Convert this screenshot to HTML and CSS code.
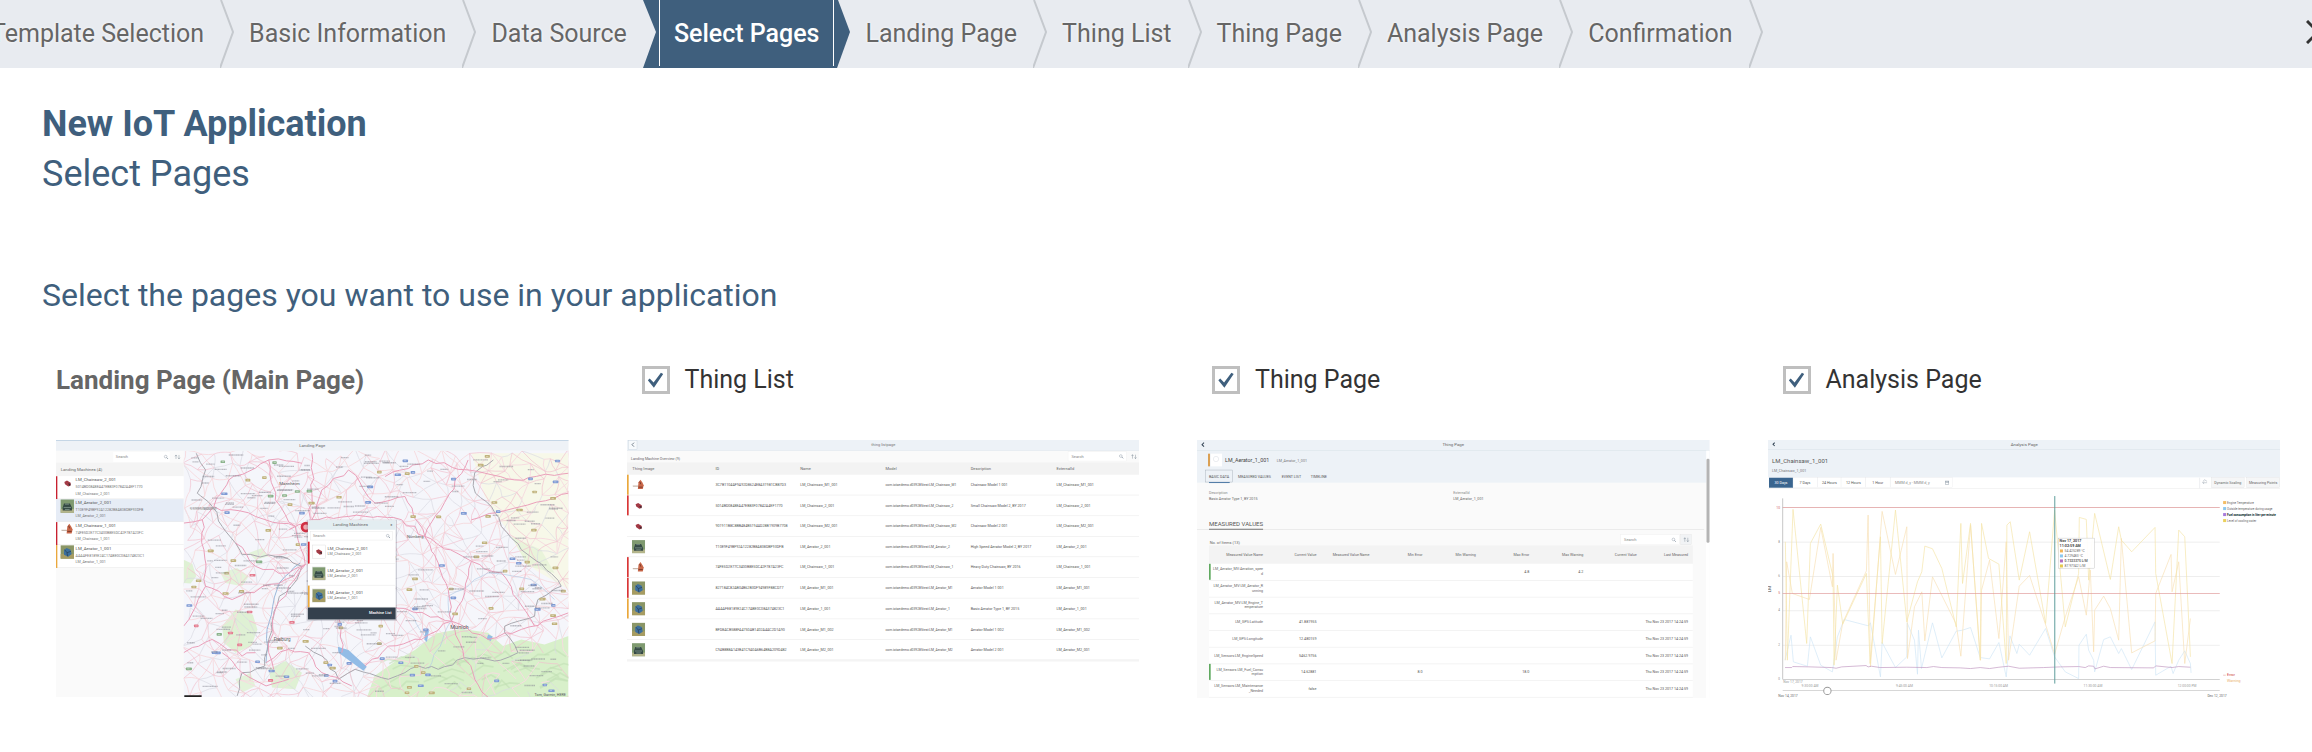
FILE: index.html
```html
<!DOCTYPE html>
<html lang="en">
<head>
<meta charset="utf-8">
<title>New IoT Application</title>
<link rel="stylesheet" href="styles.css">
</head>
<body>
<header class="wizard">
  <ol class="steps">
    <li class="step"><button class="step-name" type="button">Template Selection</button><svg class="arrow" viewBox="0 0 14 68"><path d="M1 0L13 32L0 68"/></svg></li>
    <li class="step"><button class="step-name" type="button">Basic Information</button><svg class="arrow" viewBox="0 0 14 68"><path d="M1 0L13 32L0 68"/></svg></li>
    <li class="step"><button class="step-name" type="button">Data Source</button><svg class="arrow arrow-in" viewBox="0 0 14 68"><path d="M0 0L13 32L0 68H14V0Z"/></svg></li>
    <li class="step step-active"><button class="step-name" type="button" aria-current="step">Select Pages</button><svg class="arrow arrow-out" viewBox="0 0 14 68"><path d="M0 0H2L14 32L1 68H0Z"/></svg></li>
    <li class="step"><button class="step-name" type="button">Landing Page</button><svg class="arrow" viewBox="0 0 14 68"><path d="M1 0L13 32L0 68"/></svg></li>
    <li class="step"><button class="step-name" type="button">Thing List</button><svg class="arrow" viewBox="0 0 14 68"><path d="M1 0L13 32L0 68"/></svg></li>
    <li class="step"><button class="step-name" type="button">Thing Page</button><svg class="arrow" viewBox="0 0 14 68"><path d="M1 0L13 32L0 68"/></svg></li>
    <li class="step"><button class="step-name" type="button">Analysis Page</button><svg class="arrow" viewBox="0 0 14 68"><path d="M1 0L13 32L0 68"/></svg></li>
    <li class="step"><button class="step-name" type="button">Confirmation</button><svg class="arrow" viewBox="0 0 14 68"><path d="M1 0L13 32L0 68"/></svg></li>
  </ol>
  <button class="close" type="button" aria-label="Close"><svg class="close-icon" viewBox="0 0 24 24"><path d="M1 1L23 23M23 1L1 23"/></svg></button>
</header>
<main class="content">
  <h1 class="title">New IoT Application</h1>
  <p class="subtitle">Select Pages</p>
  <h2 class="prompt">Select the pages you want to use in your application</h2>
  <div class="pages">
    <section class="page">
      <h3 class="page-main">Landing Page (Main Page)</h3>
      <svg class="preview" id="landing" viewBox="0 0 1542 774"></svg>
    </section>
    <section class="page">
      <label class="page-option"><input class="tick" type="checkbox" checked>Thing List</label>
      <svg class="preview" id="list" viewBox="0 0 1536 774"></svg>
    </section>
    <section class="page">
      <label class="page-option"><input class="tick" type="checkbox" checked>Thing Page</label>
      <svg class="preview" id="thing" viewBox="0 0 1536 774"></svg>
    </section>
    <section class="page">
      <label class="page-option"><input class="tick" type="checkbox" checked>Analysis Page</label>
      <svg class="preview" id="analysis" viewBox="0 0 1536 774"></svg>
    </section>
  </div>
</main>
<script src="previews.js"></script>
</body>
</html>
```
FILE: styles.css
```css
* { box-sizing: border-box; }
body {
  margin: 0;
  background: #fff;
  color: #333;
  font-family: Roboto, "Noto Sans", sans-serif;
}
.wizard {
  display: flex;
  overflow: hidden;
  background: #e8ebf0;
}
.steps {
  display: flex;
  flex: 1;
  margin: 0 0 0 -24px;
  padding: 0;
  list-style: none;
}
.step { display: flex; height: 68px; }
.step-name {
  padding: 0 16px 0 15px;
  border: 0;
  background: none;
  color: #666;
  font: 400 25px/32px Roboto, "Noto Sans", sans-serif;
  text-shadow: 0 0 3px #fff;
  white-space: nowrap;
}
.step-active .step-name {
  margin: 0 2px 2px;
  padding: 2px 14px 0;
  border: solid #fff;
  border-width: 0 1px;
  background: #3f5f7d;
  color: #fff;
  font-weight: 500;
  text-shadow: none;
}
.step-active { background: #3f5f7d; }
.arrow { width: 14px; height: 68px; fill: none; stroke: #c5c9ce; stroke-width: 2; }
.arrow-in, .arrow-out { fill: #3f5f7d; stroke: none; }
.arrow-out { background: #e8ebf0; }
.close {
  width: 24px;
  margin-right: -18px;
  padding: 0 0 4px;
  border: 0;
  background: none;
}
.close-icon { display: block; width: 24px; height: 24px; stroke: #333; stroke-width: 3; }
.content { padding: 32px 32px 50px 42px; }
.title, .subtitle, .prompt { margin: 0; color: #3f5f7d; }
.title { font-size: 36px; line-height: 48px; font-weight: 700; }
.subtitle { font-size: 36px; line-height: 52px; }
.prompt { margin-top: 71px; font-size: 32px; line-height: 48px; font-weight: 400; }
.pages {
  display: grid;
  grid-template-columns: repeat(4, 1fr);
  gap: 58px;
  margin: 45px 0 0 14px;
}
.page-main { margin: 0 0 44px; color: #666; font-size: 26px; line-height: 32px; font-weight: 700; }
.page-option {
  display: flex;
  align-items: center;
  gap: 15px;
  margin: 0 0 44px;
  padding-left: 15px;
  font-size: 25px;
  line-height: 32px;
}
.tick {
  display: grid;
  place-items: center;
  appearance: none;
  width: 28px;
  height: 28px;
  margin: 0;
  border: 3px solid #bfbfbf;
  background: #fff;
}
.tick:checked::before {
  content: "";
  width: 16px;
  height: 16px;
  background: #3f5f7d;
  clip-path: polygon(2% 52%, 14% 40%, 38% 66%, 84% 4%, 98% 12%, 40% 98%);
}
.preview { display: block; width: 100%; }
.preview text { font-family: Roboto, "Noto Sans", sans-serif; }
```
FILE: previews.js
```javascript
const rect = (x, y, w, h, fill, extra = "") =>
  `<rect x="${x}" y="${y}" width="${w}" height="${h}" fill="${fill}" ${extra}/>`;
const text = (x, y, size, str, fill = "#666", extra = "") =>
  `<text x="${x}" y="${y}" font-size="${size}" fill="${fill}" ${extra}>${str}</text>`;
const path = (d, stroke, w = 2, extra = "") =>
  `<path d="${d}" fill="none" stroke="${stroke}" stroke-width="${w}" ${extra}/>`;
const hline = (x, y, w, c = "#ececec", h = 2) => rect(x, y, w, h, c);
const lens = (x, y) =>
  `<circle cx="${x}" cy="${y}" r="4" fill="none" stroke="#678" stroke-width="1"/>` + path(`M${x + 3} ${y + 3}l4 4`, "#678", 2);
const sort = (x, y) =>
  path(`M${x} ${y + 8}v-12m-3 4l3-4l3 4M${x + 9} ${y - 4}v12m-3-4l3 4l3-4`, "#567", 1);
const END = 'text-anchor="end"';
const MID = 'text-anchor="middle"';

function photo(kind, x, y, s) {
  const at = `<g transform="translate(${x} ${y}) scale(${s / 40})">`;
  if (kind === "aerator1") return at + rect(0, 0, 40, 40, "#8b9666") + rect(0, 26, 40, 14, "#a79c62") +
    '<path d="M10 14l8-6l12 5l3 14l-11 7l-12-6z" fill="#3c6f9e"/><path d="M12 13l7 9l12-4M19 22l2 11" fill="none" stroke="#263c50" stroke-width="2"/></g>';
  if (kind === "aerator2") return at + rect(0, 0, 40, 40, "#7f9a70") + rect(0, 29, 40, 11, "#b4b58b") +
    '<path d="M10 12h18l6 12v9H6v-9z" fill="#354a45"/><path d="M13 14h12M9 24h22M13 30h14" stroke="#93a89d" stroke-width="2"/></g>';
  if (kind === "saw1") return at +
    '<path d="M2 22h20v4H3z" fill="#c9b8ad"/><path d="M20 12l6-8l6 9l4 8l-3 12H18z" fill="#c9684a"/><path d="M24 10l3 8M20 27h13" stroke="#7b3b2b" stroke-width="3"/></g>';
  return at + '<path d="M11 16l8-4l11 7v8l-7 3l-10-7z" fill="#a33a45"/><path d="M22 21l8 1l-2 7z" fill="#3b2a30"/></g>';
}

/* Landing page: list of machines beside a map */
function landing() {
  let seed = 7;
  const rnd = () => (seed = (seed * 16807) % 2147483647) / 2147483647;
  /* Breaks each straight stretch of a line into short, slightly bent pieces */
  const wander = (d, amount) => d.split("M").filter(Boolean).map(part => {
    const pts = part.split("L").map(p => p.split(" ").map(Number));
    let out = `M${pts[0][0]} ${pts[0][1]}`;
    for (let i = 1; i < pts.length; i++) {
      const [ax, ay] = pts[i - 1], [bx, by] = pts[i];
      const n = Math.max(1, Math.round(Math.hypot(bx - ax, by - ay) / 24));
      for (let k = 1; k <= n; k++) {
        const j = k === n ? 0 : amount;
        out += `L${(ax + (bx - ax) * k / n + (rnd() - .5) * j).toFixed(1)} ${(ay + (by - ay) * k / n + (rnd() - .5) * j).toFixed(1)}`;
      }
    }
    return out;
  }).join("");
  let s = rect(0, 0, 1542, 774, "#fafafa");

  s += '<svg x="384" y="32" width="1158" height="742" viewBox="384 32 1158 742">' + rect(384, 32, 1158, 742, "#f5f6fb");
  const area = (d, c) => `<path d="${d}" fill="${c}"/>`;
  s += area("M1250 40L1542 40V450L1440 390L1350 260L1290 170Z", "#f7f8e9");
  s += area("M936 774L958 710L1030 660L1080 632L1142 582L1220 568L1300 580L1345 620L1400 600L1470 615L1542 590V774Z", "#d8f0ca");
  s += area("M500 560L540 510L592 525L606 570L588 620L540 640L505 610Z", "#dff1d4");
  s += area("M384 360L410 372L422 410L405 432L384 430Z", "#dff1d4");
  s += area("M495 400L545 385L580 410L560 440L510 430Z", "#e3f3da");
  s += area("M580 340L620 325L640 350L600 360Z", "#e3f3da");
  s += area("M640 690L690 665L740 700L720 750L650 745Z", "#dff1d4");
  s += area("M540 720L585 700L600 740L560 760Z", "#e3f3da");
  s += area("M1370 290L1460 330L1500 400L1420 380Z", "#e9f4da");
  for (let i = 0; i < 30; i++) {
    const x = 970 + rnd() * 550, y = 640 + rnd() * 120;
    s += path(`M${x} ${y}l${20 + rnd() * 30} ${-10 - rnd() * 20}l${20 + rnd() * 20} ${rnd() * 24}`, "#c2dfb4", 5, 'opacity=".6"');
  }

  const cols = 29, rows = 18, nodes = [];
  for (let r = 0; r <= rows; r++) {
    for (let c = 0; c <= cols; c++) nodes.push([375 + c * 41 + rnd() * 34, 25 + r * 42 + rnd() * 34]);
  }
  const join = (a, b) => `M${a[0]} ${a[1]}q${(b[0] - a[0]) / 2 + rnd() * 18 - 9} ${(b[1] - a[1]) / 2 + rnd() * 18 - 9} ${b[0] - a[0]} ${b[1] - a[1]}`;
  let faint = "", pink = "", grey = "";
  nodes.forEach((n, i) => {
    [1, cols + 1, cols + 2, cols].forEach(step => {
      const m = nodes[i + step];
      if (!m || Math.abs(m[0] - n[0]) > 110 || (n[1] > 610 && n[0] > 1000 && rnd() < .6)) return;
      const k = rnd();
      if (k < .3) faint += join(n, m);
      else if (k < .54) pink += join(n, m);
      else if (k < .68) grey += join(n, m);
    });
  });
  s += path(grey, "#d9dae2", 2) + path(faint, "#f6dce0", 3) + path(pink, "#f2bfcd", 2);

  s += path(wander("M735 370L672 430L652 500L635 570L632 670", 8), "#9bb8da", 3);
  s += path(wander("M1190 540L1180 470L1300 400L1430 420L1500 480M1192 540L1120 690M1110 590L1060 520", 10), "#b4cce6", 2);
  s += area("M848 622L880 632L935 682L925 694L880 662L850 640Z", "#92bce6");
  s += area("M1112 572l10 2l-6 34l-8-8z", "#92bce6") + area("M1300 585l14 6l-6 14l-12-6z", "#92bce6");
  s += path(wander("M422 40L450 90L425 160L470 200L500 260L540 310L560 345L660 350L740 380L725 420L672 470L655 530L640 600L628 680L600 690L560 700L545 770", 14), "#a9a9b0", 3);
  s += path(wander("M1316 60L1260 98L1262 160L1310 200L1340 260L1400 330L1460 372L1520 440L1450 480L1440 530L1350 560L1350 580L1390 640L1320 665L1230 655L1150 690L1090 680L1050 700L1000 720L900 690L850 720L800 650L750 620", 14), "#a9a9b0", 3);
  const highways = [
    "M384 250L440 240L475 200L520 120L640 60L740 70", "M440 240L445 330L450 440L530 480L690 420L750 375",
    "M450 440L400 540L384 560", "M640 60L660 180L720 260L750 375L700 440L660 510L640 640L655 690",
    "M702 270L770 240L800 150L880 90L960 190L1050 170L1110 290", "M770 40L770 160L760 260L790 370L760 480L850 530L860 640",
    "M1110 290L1240 60", "M1110 290L1040 240L880 230L770 240", "M1110 290L1250 365L1340 400L1440 560",
    "M1110 290L1150 370L1180 450L1190 545", "M1190 545L1010 500L900 530L850 530", "M1190 545L1230 460L1250 365",
    "M1190 545L1300 600L1400 570L1542 520", "M1190 545L1100 600L1000 620L930 680", "M990 110L1120 60L1240 90L1380 120L1542 100",
    "M1250 240L1400 200L1542 160", "M632 670L700 630L760 640L800 700L890 740", "M500 640L560 700L632 740L700 720",
    "M384 640L470 600L560 650L600 640", "M475 200L600 230L720 260", "M540 310L600 380L700 400L750 375", "M1190 545L1260 720L1300 774"
  ];
  s += path(wander(highways.join(""), 12), "#eaa0ba", 3, 'stroke-linejoin="round"');

  const tags = ["#7f9bd4", "#7f9bd4", "#c0b27c", "#c0b27c", "#e47b8e", "#8ab38b"];
  for (let i = 0; i < 125; i++) {
    const x = 390 + rnd() * 1130, y = 45 + rnd() * 715;
    const color = x < 800 ? tags[Math.floor(rnd() * 6)] : tags[Math.floor(rnd() * 4)];
    s += rect(x, y, 13 + rnd() * 6, 8, color, 'rx="2"') + rect(x + 4, y + 3, 7, 2, "#fff", 'opacity=".6"');
  }
  for (let i = 0; i < 260; i++) {
    const x = 390 + rnd() * 1110, y = 45 + rnd() * 720;
    s += path(`M${x} ${y}h${16 + rnd() * 30}`, "#8b8b96", 4, 'stroke-dasharray="4 1 2 1 5 1" opacity=".55"');
  }
  s += text(672, 136, 13, "Mannheim", "#555") + text(1186, 570, 17, "Munich", "#555") + text(655, 604, 14, "Freiburg", "#666");
  s += text(1056, 294, 12, "Nürnberg", "#555") + text(405, 210, 12, "LUXEMBOURG", "#999");
  s += '<circle cx="752" cy="262" r="16" fill="#d22f43"/><circle cx="752" cy="262" r="8" fill="#f0a8b0"/>';
  s += rect(386, 768, 52, 6, "#222") + text(1534, 770, 11, "Tom, Garmin, HERE", "#555", END) + "</svg>";

  s += rect(0, 0, 1542, 32, "#eef2f7") + hline(0, 0, 1542, "#c5d6e6", 3) + text(771, 20, 13, "Landing Page", "#666", MID);
  s += rect(172, 36, 170, 30, "#fff") + text(180, 55, 12, "Search", "#888") + lens(330, 50) + sort(361, 49);
  s += rect(0, 68, 384, 41, "#f4f4f4") + text(14, 92, 13, "Landing Machines (4)");
  const machines = [
    ["LM_Chainsaw_2_001", "5014BD0848EA47EB83F07842A4EF1770", "saw2", "#c8202f"],
    ["LM_Aerator_2_001", "T10E9F49BF92A12282B8A838DBF93DFB", "aerator2", ""],
    ["LM_Chainsaw_1_001", "74FE5D2E77C3400B8E5DC42F787A23FC", "saw1", "#c8202f"],
    ["LM_Aerator_1_001", "AAAAFE8189E24C17ABE0C08A374823C1", "aerator1", "#eaa83c"]
  ];
  machines.forEach(([name, id, kind, bar], i) => {
    const y = 109 + i * 69;
    s += rect(0, y, 384, 69, i === 1 ? "#e6ecf6" : "#fff") + hline(0, y + 67, 384);
    if (bar) s += rect(0, y, 4, 69, bar);
    s += photo(kind, 14, y + 1, 40) + text(59, y + 14, 13, name, "#555");
    s += text(59, y + 35, 11, id, "#777") + text(59, y + 55, 11, name, "#777");
  });

  s += rect(754, 240, 272, 304, "#556", 'opacity=".25"') + rect(758, 242, 264, 298, "#fff");
  s += rect(758, 242, 264, 28, "#e3edf1") + text(886, 260, 13, "Landing Machines", "#666", MID) + text(1006, 259, 12, "×", "#555");
  s += rect(766, 275, 246, 26, "#fff", 'stroke="#ddd"') + text(773, 292, 12, "Search", "#888") + lens(998, 288);
  [["LM_Chainsaw_2_001", "saw2", "#d8232f"], ["LM_Aerator_2_001", "aerator2", ""], ["LM_Aerator_1_001", "aerator1", "#eaa83c"]].forEach(([name, kind, bar], i) => {
    const y = 306 + i * 66;
    if (bar) s += rect(758, y, 5, 66, bar);
    s += rect(772, y + 10, 38, 40, "#fff", 'stroke="#ccc"') + photo(kind, 772, y + 11, 38) + hline(763, y + 64, 259);
    s += text(817, y + 24, 13, name, "#555") + text(817, y + 41, 11, name, "#777");
  });
  s += rect(758, 504, 264, 36, "#34404d") + text(1010, 525, 12, "Machine List", "#fff", END + ' font-weight="500"');
  return s;
}

/* Thing list: one table */
function list() {
  let s = rect(0, 0, 1536, 660, "#fff") + rect(0, 0, 1536, 32, "#edf2f7") + hline(0, 31, 1536, "#e2e8ee");
  s += rect(4, 2, 26, 26, "#f7fafc", 'stroke="#bccbd8"') + path("M21 8L15 14L21 20", "#345", 2) + text(768, 19, 12, "thing listpage", "#777", MID);
  s += rect(0, 33, 1536, 34, "#fafafa") + text(12, 59, 11, "Landing Machine Overview (9)");
  s += rect(1322, 35, 174, 28, "#fff", 'stroke="#eee"') + text(1332, 54, 12, "Search", "#888") + lens(1480, 48) + sort(1515, 48);
  s += rect(0, 67, 1536, 37, "#f3f3f3");
  ["Thing Image", "ID", "Name", "Model", "Description", "ExternalId"].forEach((h, i) => { s += text([16, 265, 519, 775, 1030, 1287][i], 90, 12, h, "#666"); });
  const rows = [
    ["saw1", "3C7B1104AF9A92D8624E8A31981CB87D3", "Chainsaw_M1_001", "Chainsaw_M1", "Chainsaw Model 1 001", "#eaa83c"],
    ["saw2", "5014BD0848EA47EB83F07842A4EF1770", "Chainsaw_2_001", "Chainsaw_2", "Small Chainsaw Model 2, BY 2017", "#d93636"],
    ["saw2", "901911B8C8BB484B5194AD28B1909B7708", "Chainsaw_M2_001", "Chainsaw_M2", "Chainsaw Model 2 001", ""],
    ["aerator2", "T10E9F49BF92A12282B8A838DBF93DFB", "Aerator_2_001", "Aerator_2", "High Speed Aerator Model 2, BY 2017", ""],
    ["saw1", "74FE5D2E77C3400B8E5DC42F787A23FC", "Chainsaw_1_001", "Chainsaw_1", "Heavy Duty Chainsaw, BY 2016", "#d93636"],
    ["aerator1", "827184C82AB04B62B3DF94989F88CD77", "Aerator_M1_001", "Aerator_M1", "Aerator Model 1 001", "#d93636"],
    ["aerator1", "AAAAFE8189E24C17ABE0C08A374823C1", "Aerator_1_001", "Aerator_1", "Basic Aerator Type 1, BY 2015", "#eaa83c"],
    ["aerator1", "BFD8ACB588FA4750AB1402A4AC2D1A90", "Aerator_M1_002", "Aerator_M1", "Aerator Model 1 002", ""],
    ["aerator2", "C94B8B8A143B41C9A0A6B64B8A209D482", "Aerator_M2_001", "Aerator_M2", "Aerator Model 2 001", ""]
  ];
  rows.forEach(([kind, id, name, model, desc, bar], i) => {
    const y = Math.round(104 + i * 61.8);
    if (bar) s += rect(0, y, 5, 61, bar);
    s += hline(0, y + 60, 1536, "#eee") + photo(kind, 15, y + 11, 39);
    [[265, id, 11], [519, "LM_" + name, 11], [775, "com.iotaedemo.d039285test:LM_" + model, 10], [1030, desc, 11], [1287, "LM_" + name, 11]].forEach(([x, t, size]) => { s += text(x, y + 34, size, t, "#555"); });
  });
  return s + rect(0, 658, 1536, 6, "#f4f4f4");
}

/* Thing page: header, tabs and measured values */
function thing() {
  let s = rect(0, 0, 1536, 774, "#fafafa") + rect(0, 0, 1536, 128, "#edf2f7") + hline(0, 31, 1536, "#dde5ec");
  s += path("M21 8L15 14L21 20", "#345", 3) + text(768, 19, 13, "Thing Page", "#666", MID);
  s += rect(33, 41, 6, 38, "#dba052") + rect(41, 41, 34, 38, "#fff") + '<circle cx="57" cy="57" r="8" fill="none" stroke="#e2e6ea" stroke-width="2"/>';
  s += text(84, 66, 16, "LM_Aerator_1_001", "#444") + text(239, 67, 11, "LM_Aerator_1_001", "#777");
  s += rect(25, 90, 82, 36, "none", 'stroke="#8d99a5"');
  ["BASIC DATA", "MEASURED VALUES", "EVENT LIST", "TIMELINE"].forEach((t, i) => { s += text([36, 123, 254, 341][i], 113, 11, t, "#555"); });
  s += hline(36, 126, 62, "#4f7ba6", 3) + text(36, 162, 11, "Description", "#888") + text(36, 179, 11, "Basic Aerator Type 1, BY 2015");
  s += text(768, 162, 11, "ExternalId", "#888") + text(768, 179, 11, "LM_Aerator_1_001");
  s += text(36, 257, 18, "MEASURED VALUES", "#555") + hline(0, 267, 1520, "#e5e5e5") + hline(36, 266, 162, "#777", 3);
  s += text(38, 311, 12, "No. of Items (13)") + rect(1270, 284, 175, 30, "#fff", 'stroke="#eee"') + text(1280, 303, 12, "Search", "#888") + lens(1428, 298);
  s += rect(1450, 284, 31, 30, "#f1f3f5", 'stroke="#ddd"') + sort(1462, 297);
  s += rect(36, 316, 1450, 55, "#f3f3f3") + rect(36, 371, 1450, 403, "#fff");
  const cols = [198, 358, 517, 676, 836, 996, 1158, 1318, 1472];
  ["Measured Value Name", "Current Value", "Measured Value Name", "Min Error", "Min Warning", "Max Error", "Max Warning", "Current Value", "Last Measured"].forEach((h, i) => { s += text(cols[i], 348, 11, h, "#666", END); });
  const rows = [
    [["LM_Aerator_MV:Aeration_spee", "d"], "", "", "4.8", "4.2", 0, 1],
    [["LM_Aerator_MV:LM_Aerator_R", "unning"], "", "", "", "", 0, 0],
    [["LM_Aerator_MV:LM_Engine_T", "emperature"], "", "", "", "", 0, 0],
    [["LM_GPS:Latitude"], "41.881955", "", "", "", 1, 0],
    [["LM_GPS:Longitude"], "12.480159", "", "", "", 1, 0],
    [["LM_Sensors:LM_EngineSpeed"], "5462.9756", "", "", "", 1, 0],
    [["LM_Sensors:LM_Fuel_Consu", "mption"], "14.62881", "8.0", "18.0", "", 1, 1],
    [["LM_Sensors:LM_Maintenance", "_Needed"], "false", "", "", "", 1, 0]
  ];
  rows.forEach(([names, now, minErr, maxErr, maxWarn, date, ok], i) => {
    const y = 371 + i * 50;
    if (ok) s += rect(36, y, 5, 48, "#5fa95f");
    s += hline(36, y + 49, 1450, "#eee");
    names.forEach((n, k) => { s += text(198, y + (names.length > 1 ? 20 + k * 14 : 28), 11, n, "#666", END); });
    [[358, now], [676, minErr], [996, maxErr], [1158, maxWarn], [1472, date ? "Thu Nov 23 2017 14:24:59" : ""]].forEach(([x, t]) => { if (t) s += text(x, y + 28, 11, t, "#555", END); });
  });
  return s + rect(1526, 32, 10, 742, "#fff") + rect(1527, 56, 9, 252, "#b4b4b4", 'rx="4"');
}

/* Analysis page: toolbar and line chart */
function analysis() {
  let s = rect(0, 0, 1536, 774, "#fff") + rect(0, 0, 1536, 112, "#edf2f7") + hline(0, 27, 1536, "#dde5ec");
  s += path("M20 8L15 13L20 18", "#345", 3) + text(768, 17, 13, "Analysis Page", "#666", MID);
  s += text(12, 70, 18, "LM_Chainsaw_1_001", "#555") + text(12, 95, 11, "LM_Chainsaw_1_001", "#777");
  s += hline(0, 145, 1536, "#eee") + rect(3, 113, 72, 30, "#3a658f");
  [75, 149, 219, 293].forEach((x, i) => { s += rect(x, 113, [74, 70, 74, 73][i], 30, "#fff", 'stroke="#e6e8ea"'); });
  ["30 Days", "7 Days", "24 Hours", "12 Hours", "1 Hour"].forEach((t, i) => { s += text([39, 111, 184, 256, 329][i], 132, 11, t, i ? "#555" : "#fff", MID); });
  s += rect(368, 113, 184, 30, "#fff", 'stroke="#e6e8ea"') + text(381, 132, 11, "MMM d, y - MMM d, y", "#888") + rect(532, 123, 10, 10, "none", 'stroke="#678"') + hline(532, 125, 10, "#678");
  s += hline(1293, 113, 2, "#e6e8ea", 32) + path("M1307 132l-4-4l4-4M1303 128h13M1304 124l4-5l8 5", "#678", 1);
  s += rect(1329, 113, 98, 30, "#f5f6f7", 'stroke="#ddd"') + text(1378, 132, 11, "Dynamic Scaling", "#666", MID);
  s += rect(1435, 113, 99, 30, "#f5f6f7", 'stroke="#ddd"') + text(1484, 132, 11, "Measuring Points", "#666", MID);

  s += '<g transform="translate(-24 -30)">';
  [335, 438, 541, 644, 747].forEach((y, i) => { s += hline(68, y, 1310, i === 4 ? "#bbb" : "#e6e6e6", 2) + text(60, y + 3, 9, String(8 - 2 * i), "#888", END); });
  s += path("M68 205V747", "#aaa", 2) + text(60, 236, 10, "10", "#c66", END) + text(60, 493, 10, "5", "#c66", END);
  s += text(33, 486, 13, "LM", "#444", 'transform="rotate(-90 33 486)"');
  const line = (points, color, w = 2) => `<polyline points="${points}" fill="none" stroke="${color}" stroke-width="${w}"/>`;
  s += line("75,690 93,615 100,695 142,708 151,620 182,705 217,725 232,620 252,568 325,587 331,578 361,740 366,637 406,712 440,680 441,578 463,630 472,732 475,600 484,715 517,578 545,683 588,603 607,600 631,592 660,682 688,686 716,637 738,740 749,617 770,670 777,642 808,675 856,595 883,680 915,725 955,745 956,645 978,612 985,660 1000,690 1003,725 1030,628 1050,620 1075,670 1083,655 1114,718 1184,575 1186,735 1232,708 1238,730 1255,690 1273,662 1290,700 1292,728", "#cfe5f6");
  s += line("76,690 80,395 97,490 148,508 182,292 217,470 219,370 228,690 248,578 319,422 324,255 331,710 366,244 406,433 440,290 442,685 463,530 485,485 494,632 517,440 588,582 602,678 631,285 661,690 664,480 688,390 716,625 738,335 745,690 777,468 808,436 858,590 883,672 915,560 955,440 978,555 990,420 1000,665 1003,540 1030,498 1050,535 1075,630 1083,325 1114,668 1184,632 1186,490 1232,373 1235,485 1255,395 1273,700 1290,565", "#f7e0b4");
  s += line("76,335 82,690 99,238 140,640 151,340 182,282 219,440 222,705 232,465 248,582 319,430 330,700 361,320 366,640 406,240 440,575 472,455 485,425 494,348 517,356 545,415 588,590 602,280 607,460 631,280 660,690 664,280 685,385 716,402 738,700 740,285 750,275 777,450 808,305 856,580 883,240 915,590 955,430 957,262 978,268 985,450 1003,250 1050,448 1075,290 1083,330 1114,365 1184,292 1186,430 1235,700 1255,300 1273,320 1290,680", "#f4e4a6");
  s += line("75,712 95,712 98,709 150,710 215,712 228,714 245,710 318,706 324,710 334,708 360,712 440,711 500,712 520,709 545,712 600,713 631,715 660,712 688,715 716,711 745,708 777,714 850,712 900,710 955,709 975,712 985,707 1000,708 1004,716 1030,708 1050,712 1180,713 1186,707 1235,712 1255,709 1290,711", "#bf95bf", 2);
  s += hline(68, 231, 1310, "#d98f8f") + hline(68, 489, 1310, "#e09a9a") + hline(882, 198, 3, "#5f9e9c", 562);
  s += rect(894, 324, 108, 90, "#fff", 'stroke="#aaa" fill-opacity=".9"') + text(898, 336, 11, "Nov 17, 2017", "#444", 'font-weight="700"') + text(898, 350, 11, "11:02:59 AM", "#444", 'font-weight="700"');
  [["#f1b558", "54.425289 °C"], ["#8cc8ef", "4.729483 °C"], ["#b06cc0", "0.7323375 L/M"], ["#e5c84f", "87.97342 L/M"]].forEach(([c, t], i) => {
    s += rect(899, 358 + i * 15, 9, 9, c) + text(913, 366 + i * 15, 10, t, "#666", i === 2 ? 'font-weight="700"' : "");
  });
  [["#f3bd66", "Engine Temperature"], ["#8cc8ef", "Outside temperature during usage"], ["#a77bdc", "Fuel consumption in liter per minute"], ["#ead05c", "Level of cooling water"]].forEach(([c, t], i) => {
    s += rect(1388, 213 + i * 18, 9, 9, c) + text(1400, 221 + i * 18, 9, t, i === 2 ? "#022" : "#666", i === 2 ? 'font-weight="700"' : "");
  });
  s += hline(1388, 734, 8, "#c55", 1) + text(1400, 736, 11, "Error", "#c33") + text(1400, 754, 11, "Warning", "#eab070");
  s += text(70, 759, 10, "Nov 17, 2017", "#999");
  ["9:30:00 AM", "9:45:00 AM", "10:15:00 AM", "11:30:00 AM", "12:00:00 PM"].forEach((t, i) => { s += text([150, 433, 715, 998, 1280][i], 771, 10, t, "#999", MID); });
  s += hline(68, 780, 1310, "#c4c4c4") + '<circle cx="202" cy="782" r="11" fill="#fff" stroke="#999" stroke-width="3"/>';
  s += text(55, 801, 10, "Nov 14, 2017") + text(1341, 801, 10, "Dec 12, 2017") + "</g>";
  return s;
}

Object.entries({ landing, list, thing, analysis }).forEach(([id, draw]) => {
  document.getElementById(id).innerHTML = draw();
});
```
